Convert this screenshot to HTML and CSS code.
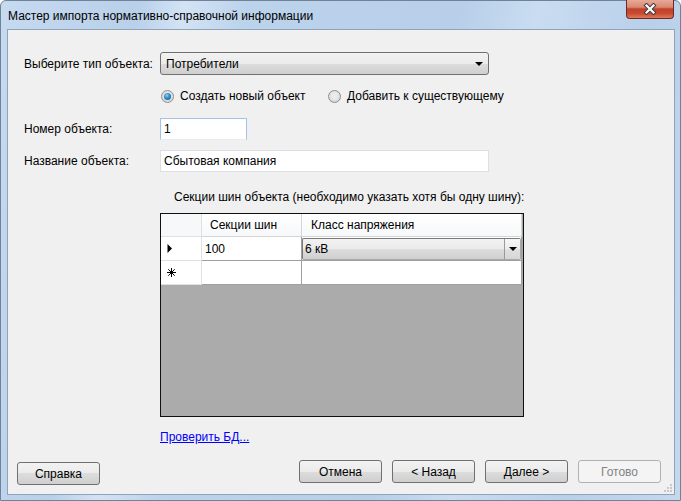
FILE: index.html
```html
<!DOCTYPE html>
<html lang="ru">
<head>
    <meta charset="UTF-8">
    <title>Мастер импорта нормативно-справочной информации</title>
    <link rel="stylesheet" href="styles.css">
</head>
<body>
    <div class="window">
        <div class="titlebar">
            <span class="title">Мастер импорта нормативно-справочной информации</span>
            <div class="close-btn">
                <svg class="close-x" width="14" height="12" viewBox="0 0 14 12">
                    <path d="M3.5 2.5 L10.5 9.5 M10.5 2.5 L3.5 9.5" stroke="#3c3c3c" stroke-width="4.2" stroke-linecap="square" fill="none"/>
                    <path d="M3.5 2.5 L10.5 9.5 M10.5 2.5 L3.5 9.5" stroke="#ffffff" stroke-width="2.2" stroke-linecap="square" fill="none"/>
                </svg>
            </div>
        </div>

        <div class="client">
            <div class="form-row row-type">
                <span class="field-label">Выберите тип объекта:</span>
                <div class="combo">
                    <span>Потребители</span>
                    <span class="arrow"></span>
                </div>
            </div>

            <div class="radio-row">
                <label class="radio first"><span class="radio-dot checked"></span>Создать новый объект</label>
                <label class="radio"><span class="radio-dot"></span>Добавить к существующему</label>
            </div>

            <div class="form-row row-number">
                <span class="field-label">Номер объекта:</span>
                <div class="textbox number focused">1</div>
            </div>

            <div class="form-row row-name">
                <span class="field-label">Название объекта:</span>
                <div class="textbox name">Сбытовая компания</div>
            </div>

            <div class="caption">Секции шин объекта (необходимо указать хотя бы одну шину):</div>

            <div class="grid-box">
                <table class="grid">
                    <thead>
                        <tr>
                            <th class="rowhead"></th>
                            <th class="col-sec">Секции шин</th>
                            <th class="col-volt">Класс напряжения</th>
                        </tr>
                    </thead>
                    <tbody>
                        <tr>
                            <td class="rowhead">
                                <svg width="6" height="9" viewBox="0 0 6 9"><path d="M0.5 0 L5 4.5 L0.5 9 Z" fill="#000"/></svg>
                            </td>
                            <td>100</td>
                            <td class="cell-combo">
                                <div class="cell-combo-box">
                                    <span class="cell-value">6 кВ</span>
                                    <span class="drop"><span class="arrow"></span></span>
                                </div>
                            </td>
                        </tr>
                        <tr>
                            <td class="rowhead">
                                <svg width="9" height="9" viewBox="0 0 9 9">
                                    <path d="M4.5 0 V9 M0 4.5 H9 M1.3 1.3 L7.7 7.7 M7.7 1.3 L1.3 7.7" stroke="#000" stroke-width="1"/>
                                </svg>
                            </td>
                            <td></td>
                            <td></td>
                        </tr>
                    </tbody>
                </table>
            </div>

            <div class="link-row"><a class="link" href="#">Проверить БД...</a></div>

            <div class="footer">
                <button class="btn help">Справка</button>
                <div class="spacer"></div>
                <button class="btn">Отмена</button>
                <button class="btn">&lt; Назад</button>
                <button class="btn">Далее &gt;</button>
                <button class="btn" disabled>Готово</button>
            </div>

            <svg class="grip" width="10" height="10" viewBox="0 0 10 10">
                <rect x="7" y="1" width="2" height="2" fill="#c8c8c8"/>
                <rect x="4" y="4" width="2" height="2" fill="#c8c8c8"/>
                <rect x="7" y="4" width="2" height="2" fill="#c8c8c8"/>
                <rect x="1" y="7" width="2" height="2" fill="#c8c8c8"/>
                <rect x="4" y="7" width="2" height="2" fill="#c8c8c8"/>
                <rect x="7" y="7" width="2" height="2" fill="#c8c8c8"/>
            </svg>
        </div>
    </div>
</body>
</html>
```

FILE: styles.css
```css
html, body {
    margin: 0;
    padding: 0;
}
body {
    font-family: "Liberation Sans", Arial, sans-serif;
    font-size: 12px;
    color: #000;
    width: 681px;
    height: 501px;
    overflow: hidden;
}
.window {
    position: relative;
    box-sizing: border-box;
    width: 681px;
    height: 501px;
    display: flex;
    flex-direction: column;
    padding: 0 5px 5px 6px;
    border: 1px solid #6f8297;
    border-radius: 6px 6px 0 0;
    background: linear-gradient(100deg, #c6daf0 0%, #b9d0ea 18%, #d3e3f4 24%, #bcd3ec 32%, #b7cfe9 60%, #c9dcf1 70%, #b9d0ea 85%, #c4d8ee 100%);
}
.titlebar {
    height: 28px;
    display: flex;
    align-items: center;
    padding-left: 1px;
}
.title {
    font-size: 12px;
    color: #000;
    padding-top: 2px;
}
.close-btn {
    position: absolute;
    top: -1px;
    right: 6px;
    width: 48px;
    height: 19px;
    box-sizing: border-box;
    border: 1px solid #6e2a20;
    border-top: none;
    border-radius: 0 0 4px 4px;
    background: linear-gradient(#e9a99a 0%, #d98872 40%, #c1402a 50%, #c94a31 75%, #e07b5a 100%);
}
.close-x {
    position: absolute;
    left: 16px;
    top: 3px;
}
.client {
    position: relative;
    flex: 1;
    display: flex;
    flex-direction: column;
    background: #f0f0f0;
    border: 1px solid #8fa3b9;
    padding-top: 22px;
}

/* form rows */
.form-row {
    display: flex;
    align-items: center;
    padding-left: 16px;
}
.field-label {
    width: 136px;
    flex-shrink: 0;
}
.row-type {
    height: 23px;
}
.combo {
    box-sizing: border-box;
    width: 329px;
    height: 23px;
    border: 1px solid #707070;
    border-radius: 3px;
    background: linear-gradient(#f2f2f2 0%, #ebebeb 50%, #dddddd 50%, #cfcfcf 100%);
    display: flex;
    align-items: center;
    justify-content: space-between;
    padding: 0 5px 0 5px;
}
.arrow {
    width: 0;
    height: 0;
    border-left: 4px solid transparent;
    border-right: 4px solid transparent;
    border-top: 4px solid #000;
}
.radio-row {
    display: flex;
    align-items: center;
    height: 16px;
    margin-top: 13px;
    padding-left: 153px;
}
.radio {
    display: flex;
    align-items: center;
}
.radio.first {
    width: 167px;
}
.radio-dot {
    box-sizing: border-box;
    width: 13px;
    height: 13px;
    border-radius: 50%;
    border: 1px solid #8e8f8f;
    background: radial-gradient(circle at 50% 40%, #f7f7f7 0%, #dcdcdc 60%, #cfcfcf 100%);
    margin-right: 6px;
    position: relative;
}
.radio-dot::after {
    content: "";
    position: absolute;
    left: 2px;
    top: 2px;
    width: 7px;
    height: 7px;
    border-radius: 50%;
    background: radial-gradient(circle at 50% 40%, #eeeeee 0%, #e4e4e4 100%);
}
.radio-dot.checked::after {
    background: radial-gradient(circle at 40% 35%, #8fd2f7 0%, #2d89c7 45%, #155a93 100%);
}
.row-number {
    margin-top: 14px;
}
.row-name {
    margin-top: 10px;
}
.textbox {
    box-sizing: border-box;
    height: 22px;
    background: #fff;
    border: 1px solid #dcdfe3;
    padding: 0 3px;
    display: flex;
    align-items: center;
}
.textbox.number {
    width: 87px;
}
.textbox.focused {
    border-color: #a3c3e6 #a3c3e6 #e5edf5 #a3c3e6;
}
.textbox.name {
    width: 329px;
}
.caption {
    margin-top: 18px;
    padding-left: 166px;
    line-height: 14px;
}

/* data grid */
.grid-box {
    box-sizing: border-box;
    width: 364px;
    height: 204px;
    margin-top: 9px;
    margin-left: 152px;
    border: 1px solid #101010;
    background: #ababab;
}
.grid {
    table-layout: fixed;
    border-collapse: separate;
    border-spacing: 0;
    width: 361px;
}
.grid th,
.grid td {
    box-sizing: border-box;
    padding: 0;
    text-align: left;
    font-weight: normal;
    background: #fff;
    border-right: 1px solid #a0a0a0;
    border-bottom: 1px solid #a0a0a0;
    height: 24px;
    white-space: nowrap;
}
.grid th {
    height: 23px;
    background: linear-gradient(#ffffff 0%, #f7f8fa 100%);
    border-color: #d5d5d5;
}
.grid .rowhead {
    width: 41px;
    border-color: #e0e0e0;
    padding-left: 6px;
}
.grid th.rowhead {
    background: #f7f8fa;
}
.grid .col-sec {
    width: 100px;
    padding-left: 8px;
}
.grid .col-volt {
    width: 220px;
    padding-left: 9px;
}
.grid td {
    padding-left: 3px;
}
.grid td.rowhead svg {
    display: block;
}
.grid td.cell-combo {
    padding: 1px 0 0 0;
    vertical-align: top;
}
.cell-combo-box {
    box-sizing: border-box;
    height: 22px;
    border: 1px solid #7a7a7a;
    border-right-color: #a8a8a8;
    border-bottom-color: #a8a8a8;
    border-radius: 2px;
    background: linear-gradient(#f2f2f2 0%, #ebebeb 50%, #dddddd 50%, #cfcfcf 100%);
    display: flex;
    align-items: center;
    padding-left: 2px;
}
.cell-value {
    flex: 1;
}
.drop {
    width: 15px;
    height: 100%;
    border-left: 1px solid #9a9a9a;
    display: flex;
    align-items: center;
    justify-content: center;
    background: linear-gradient(#f6f6f6 0%, #ececec 50%, #e0e0e0 50%, #d6d6d6 100%);
}

.link-row {
    margin-top: 13px;
    padding-left: 152px;
    line-height: 14px;
}
.link {
    color: #0000ff;
    text-decoration: underline;
}

/* bottom buttons */
.footer {
    margin-top: auto;
    display: flex;
    align-items: flex-start;
    gap: 10px;
    padding: 0 13px 9px 9px;
}
.spacer {
    flex: 1;
}
.btn {
    box-sizing: border-box;
    width: 83px;
    height: 23px;
    font-family: "Liberation Sans", Arial, sans-serif;
    font-size: 12px;
    color: #000;
    border: 1px solid #707070;
    border-radius: 3px;
    background: linear-gradient(#f2f2f2 0%, #ebebeb 50%, #dddddd 50%, #cfcfcf 100%);
    padding: 0;
}
.btn.help {
    margin-top: 2px;
}
.btn:disabled {
    color: #838383;
    border-color: #adb2b5;
    background: #f4f4f4;
}
.grip {
    position: absolute;
    right: 1px;
    bottom: 1px;
}
```
